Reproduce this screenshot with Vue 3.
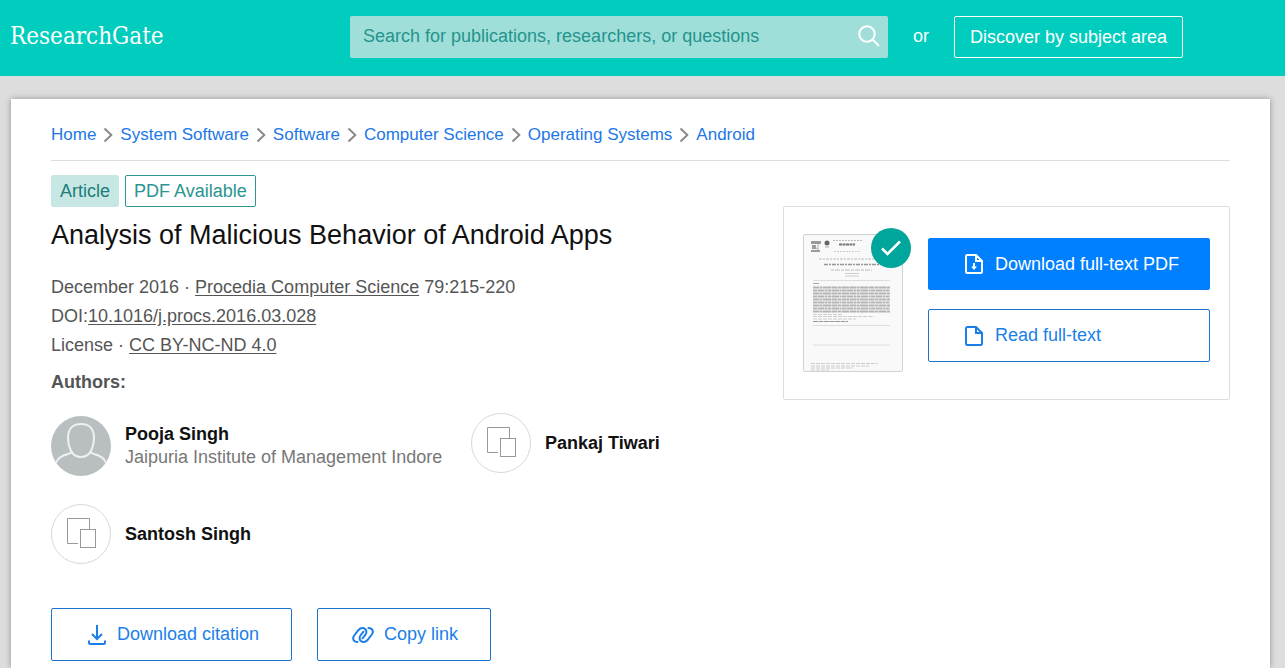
<script setup>
const crumbs = ['Home', 'System Software', 'Software', 'Computer Science', 'Operating Systems', 'Android']

const authors = [
  { name: 'Pooja Singh', affiliation: 'Jaipuria Institute of Management Indore' },
  { name: 'Pankaj Tiwari' },
  { name: 'Santosh Singh' },
]
</script>

<template>
  <div class="page">
    <header class="topbar">
      <a class="logo" href="#">ResearchGate</a>
      <form class="search" role="search" @submit.prevent>
        <input type="search" aria-label="Search" placeholder="Search for publications, researchers, or questions" />
        <button type="submit" aria-label="Submit search">
          <svg width="22" height="22" viewBox="0 0 22 22" fill="none" stroke="currentColor" stroke-width="2">
            <circle cx="9" cy="9" r="7.7" />
            <path d="M14.5 14.5 21 21" />
          </svg>
        </button>
      </form>
      <span class="or">or</span>
      <a class="discover" href="#">Discover by subject area</a>
    </header>

    <main class="sheet">
      <nav class="crumbs" aria-label="Breadcrumb">
        <template v-for="(crumb, i) in crumbs" :key="crumb">
          <svg v-if="i" width="10" height="16" viewBox="0 0 10 16" fill="none" stroke="#8a8a8a" stroke-width="2">
            <path d="M1.5 1.5 8.3 8 1.5 14.5" />
          </svg>
          <a href="#">{{ crumb }}</a>
        </template>
      </nav>

      <div class="columns">
        <article class="publication">
          <div class="tags">
            <span class="tag filled">Article</span>
            <span class="tag">PDF Available</span>
          </div>
          <h1>Analysis of Malicious Behavior of Android Apps</h1>
          <div class="meta">
            <div>December 2016 · <a href="#">Procedia Computer Science</a> 79:215-220</div>
            <div>DOI:<a href="#">10.1016/j.procs.2016.03.028</a></div>
            <div>License · <a href="#">CC BY-NC-ND 4.0</a></div>
          </div>
          <h2>Authors:</h2>
          <ul class="authors">
            <li v-for="author in authors" :key="author.name" :class="{ detailed: author.affiliation }">
              <svg v-if="author.affiliation" width="60" height="60" viewBox="0 0 60 60" fill="none">
                <circle cx="30" cy="30" r="30" fill="#b9bec1" />
                <g stroke="#eef1f3" stroke-width="2">
                  <path d="M30 8C21 8 17 14 17 22C17 27 18 31 20 35C22 39 26 41 30 41C34 41 38 39 40 35C42 31 43 27 43 22C43 14 39 8 30 8Z" />
                  <path d="M5 47C7 41 13 39 17 38C20 37 21 36 22 36M55 47C53 41 47 39 43 38C40 37 39 36 38 36" />
                </g>
              </svg>
              <svg v-else width="60" height="60" viewBox="0 0 60 60" fill="none">
                <circle cx="30" cy="30" r="29.5" stroke="#d8d8d8" />
                <path d="M27 39.5H16.5V14.5H38.5V25" stroke="#999" />
                <rect x="29.5" y="25.5" width="15" height="18" stroke="#999" />
              </svg>
              <div>
                <a class="name" href="#">{{ author.name }}</a>
                <div v-if="author.affiliation" class="affiliation">{{ author.affiliation }}</div>
              </div>
            </li>
          </ul>
          <div class="actions">
            <button type="button" class="btn cite">
              <svg width="18" height="20" viewBox="0 0 18 20" fill="none" stroke="currentColor" stroke-width="2">
                <path d="M9 0V13.5M4 9 9 14 14 9M1 15.5V17.5Q1 19 2.5 19H15.5Q17 19 17 17.5V15.5" />
              </svg>
              Download citation
            </button>
            <button type="button" class="btn link">
              <svg width="22" height="18" viewBox="0 0 22 18" fill="none" stroke="currentColor" stroke-width="2" stroke-linecap="round">
                <path d="M5.5 16C1.500 16 0 12.500 2.200 9.500L6.500 4C9 1 13.500 1.500 14.300 5C14.700 6.800 14 8 13.300 9L10.500 12.300" />
                <path d="M16.500 2C20.500 2 22 5.500 19.800 8.500L15.500 14C13 17 8.500 16.500 7.700 13C7.300 11.200 8 10 8.700 9L11.500 5.700" />
              </svg>
              Copy link
            </button>
          </div>
        </article>

        <aside class="fulltext">
          <div class="preview">
            <svg width="100" height="138" viewBox="0 0 100 138" fill="none">
              <rect x=".5" y=".5" width="99" height="137" rx="1.500" fill="#f9f9f9" stroke="#d2d2d2" />
              <path d="M8 7H18V10H8ZM9 11H13V15H9ZM8 16H17V18H8Z" fill="#9a9a9a" />
              <path d="M15 10V15M12 13 17 17" stroke="#aaa" />
              <circle cx="24" cy="9" r="2.500" fill="#666" />
              <path d="M22 13H26" stroke="#aaa" />
              <path d="M30 6.500H59" stroke="#bbb" stroke-dasharray="2 1" />
              <path d="M36 10.500H52" stroke="#777" stroke-width="2" stroke-dasharray="3 .5" />
              <path d="M31 17.500H58" stroke="#ccc" stroke-dasharray="2 1" />
              <path d="M16 25H84" stroke="#bbb" stroke-dasharray="3 1 2 1" />
              <path d="M21 30.500H76" stroke="#999" stroke-width="1.500" stroke-dasharray="4 1 2 1" />
              <path d="M28 36H69" stroke="#bbb" stroke-dasharray="3 1 5 1" />
              <path d="M42 39.500H56M42 42H56" stroke="#ccc" />
              <path d="M10 46.500H87M10 91.500H87M10 111H87" stroke="#ddd" />
              <path d="M10 49.500H16" stroke="#aaa" />
              <g stroke="#b4b4b4" stroke-width="2">
                <path d="M10 53.500H87M10 59.500H87M10 65.500H87M10 71.500H87M10 77.500H87" stroke-dasharray="6 .5 3 .5 8 .5" />
                <path d="M10 56.500H87M10 62.500H87M10 68.500H87M10 74.500H87" stroke-dasharray="4 .5 7 .5 2 .5" />
              </g>
              <path d="M10 80.500H40M10 82.500H71M10 85H53" stroke="#ccc" stroke-dasharray="4 1" />
              <path d="M10 87.500H45" stroke="#999" stroke-dasharray="5 .5" />
              <path d="M8 129.500H75M8 132H66M8 134H50M8 136H26" stroke="#ccc" stroke-dasharray="4 1" />
            </svg>
            <svg class="check" width="40" height="40" viewBox="0 0 40 40" fill="none">
              <circle cx="20" cy="20" r="20" fill="#00a59b" />
              <path d="M11 20.500 16.500 26 29 13.500" stroke="#fff" stroke-width="2.500" />
            </svg>
          </div>
          <div class="choices">
            <button type="button" class="btn primary">
              <svg width="18" height="20" viewBox="0 0 18 20" fill="none" stroke="currentColor" stroke-width="2">
                <path d="M2.500 1H11L17 7V17.500Q17 19 15.500 19H2.500Q1 19 1 17.500V2.500Q1 1 2.500 1ZM11 1V7H17M9 9V14" />
                <path d="M6 12.500H12L9 16Z" fill="currentColor" stroke="none" />
              </svg>
              Download full-text PDF
            </button>
            <button type="button" class="btn">
              <svg width="18" height="20" viewBox="0 0 18 20" fill="none" stroke="currentColor" stroke-width="2">
                <path d="M2.500 1H11L17 7V17.500Q17 19 15.500 19H2.500Q1 19 1 17.500V2.500Q1 1 2.500 1ZM11 1V7H17" />
              </svg>
              Read full-text
            </button>
          </div>
        </aside>
      </div>
    </main>
  </div>
</template>

<style>
body {
  background: #ddd;
}
</style>

<style scoped>
.page,
.page * {
  box-sizing: border-box;
}

.page {
  min-height: 100vh;
  display: flex;
  flex-direction: column;
  font-family: "Liberation Sans", Arial, sans-serif;
  font-size: 18px;
  color: #555;
}

svg {
  display: block;
  flex: none;
}

input,
button {
  font: inherit;
}

.topbar {
  display: flex;
  align-items: center;
  height: 76px;
  padding: 0 102px 2px 10px;
  background: #00cdbd;
  color: #fff;
}

.logo {
  flex: 0 0 340px;
  padding-bottom: 2px;
  font-family: "DejaVu Serif Condensed", "DejaVu Serif", serif;
  font-size: 24px;
  color: #fff;
  text-decoration: none;
}

.search {
  flex: 1;
  display: flex;
  height: 42px;
  background: #a0dfd9;
  border-radius: 2px;
}

.search input {
  flex: 1;
  min-width: 0;
  padding: 0 0 2px 13px;
  border: 0;
  background: none;
  color: #24948d;
  outline: none;
}

.search input::placeholder {
  color: #24948d;
}

.search button {
  padding: 0 8px 2px;
  border: 0;
  background: none;
  color: #fff;
}

.or {
  margin: 0 25px;
  padding-bottom: 2px;
}

.discover {
  width: 229px;
  height: 42px;
  border: 1px solid #fff;
  border-radius: 2px;
  line-height: 40px;
  text-align: center;
  white-space: nowrap;
  color: #fff;
  text-decoration: none;
}

.sheet {
  flex: 1;
  margin: 23px 15px 0 11px;
  padding: 0 40px;
  background: #fff;
  box-shadow: 0 0 6px rgba(0, 0, 0, 0.35);
}

.crumbs {
  display: flex;
  align-items: center;
  gap: 7px;
  height: 62px;
  padding-top: 11px;
  border-bottom: 1px solid #ddd;
  font-size: 17px;
}

.crumbs a {
  color: #2277e6;
  text-decoration: none;
}

.columns {
  display: flex;
  align-items: flex-start;
  justify-content: space-between;
}

.publication {
  padding-top: 14px;
}

.tags {
  display: flex;
  gap: 6px;
}

.tag {
  height: 32px;
  padding: 0 8px;
  border: 1px solid #2a9591;
  border-radius: 2px;
  line-height: 30px;
  color: #2a9591;
}

.tag.filled {
  border-color: #c6e7e3;
  background: #c6e7e3;
  color: #207c79;
}

h1 {
  margin: 10px 0 20px;
  font-size: 27px;
  font-weight: 400;
  line-height: 36px;
  color: #111;
}

.meta {
  line-height: 29px;
}

.meta a {
  color: inherit;
  text-underline-offset: 2px;
}

h2 {
  margin: 8px 0 17px;
  font-size: 18px;
  line-height: 28px;
}

.authors {
  display: grid;
  grid-template-columns: 420px auto;
  row-gap: 25px;
  margin: 0;
  padding: 0;
  list-style: none;
}

.authors li {
  display: flex;
  align-items: center;
  align-self: start;
  gap: 14px;
  line-height: 23px;
}

.authors .detailed {
  padding: 3px 0;
}

.name {
  font-weight: 700;
  color: #111;
  text-decoration: none;
}

.affiliation {
  color: #777;
}

.actions {
  display: flex;
  gap: 25px;
  margin-top: 44px;
}

.btn {
  display: flex;
  align-items: center;
  gap: 12px;
  height: 53px;
  padding: 0 0 0 36px;
  border: 1px solid #1874cd;
  border-radius: 2px;
  background: #fff;
  color: #1a80e8;
  white-space: nowrap;
}

.cite {
  gap: 11px;
  padding: 0 32px 0 36px;
}

.link {
  gap: 10px;
  padding: 0 32px 0 34px;
}

.primary {
  height: 52px;
  border-color: #0080ff;
  background: #0080ff;
  color: #fff;
}

.fulltext {
  display: flex;
  gap: 25px;
  width: 447px;
  margin-top: 45px;
  padding: 27px 19px;
  border: 1px solid #ddd;
  border-radius: 2px;
}

.preview {
  position: relative;
}

.check {
  position: absolute;
  top: -6px;
  right: -8px;
}

.choices {
  flex: 1;
  display: flex;
  flex-direction: column;
  gap: 19px;
  padding-top: 4px;
}
</style>
